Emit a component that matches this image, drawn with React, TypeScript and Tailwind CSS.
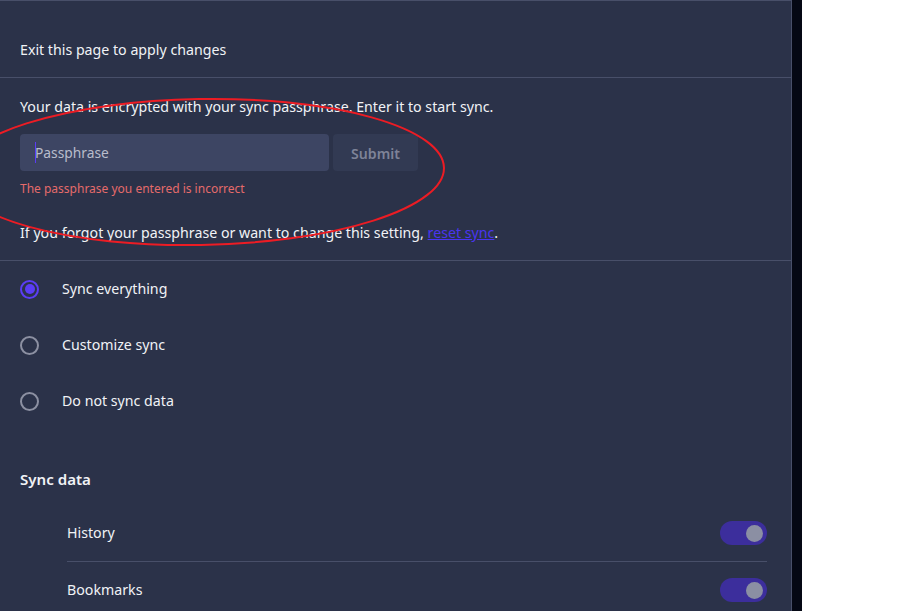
import React from "react";

function Radio({ checked }: { checked?: boolean }) {
  return checked ? (
    <span className="w-[19px] h-[19px] rounded-full border-2 border-[#5b3df5] flex items-center justify-center">
      <span className="w-[10px] h-[10px] rounded-full bg-[#5b3df5]" />
    </span>
  ) : (
    <span className="w-[19px] h-[19px] rounded-full border-2 border-[#8c90a2]" />
  );
}

function Toggle() {
  return (
    <span className="w-[47px] h-[24px] rounded-full bg-[#3c2e9c] flex items-center justify-end pr-[4px]">
      <span className="w-[17px] h-[17px] rounded-full bg-[#8b8fa3]" />
    </span>
  );
}

export default function App() {
  const font = { fontFamily: '"Noto Sans", "Segoe UI", sans-serif' };
  return (
    <div className="w-[900px] h-[611px] bg-white flex overflow-hidden relative" style={font}>
      <div className="w-[792px] h-full bg-[#2b3249] border-t border-r border-[#484f69] flex flex-col text-[#f1f2f6] text-[14.2px]">
        <div className="px-5 pt-[39px] pb-[17px] border-b border-[#484f69]">
          <div className="leading-[20px]">Exit this page to apply changes</div>
        </div>
        <div className="px-5 pt-[19px] pb-[17px] border-b border-[#484f69]">
          <div className="leading-[20px]">Your data is encrypted with your sync passphrase. Enter it to start sync.</div>
          <div className="mt-[17px] flex gap-[4px] h-[37px]">
            <div className="w-[309px] rounded-[4px] bg-[#3d4563] flex items-center pl-[15px] pt-[2px] relative">
              <span className="absolute left-[15px] top-[8px] w-[1px] h-[21px] bg-[#5b3df5]" />
              <span className="text-[#b9bdcc] text-[13.8px]">Passphrase</span>
            </div>
            <div className="w-[85px] rounded-[4px] bg-[#323a53] flex items-center justify-center pt-[2px] text-[#7e8398] font-semibold text-[14.1px]">
              Submit
            </div>
          </div>
          <div className="mt-[10px] leading-[16px] text-[12px] text-[#e56b6b]">The passphrase you entered is incorrect</div>
          <div className="mt-[26px] leading-[20px]">
            If you forgot your passphrase or want to change this setting,{" "}
            <span className="text-[#4a35f0] underline">reset sync</span>.
          </div>
        </div>
        <div className="px-5">
          {[
            ["Sync everything", true],
            ["Customize sync", false],
            ["Do not sync data", false],
          ].map(([label, c]) => (
            <div key={label as string} className="h-[56px] flex items-center">
              <Radio checked={c as boolean} />
              <span className="ml-[23px]">{label as string}</span>
            </div>
          ))}
          <div className="mt-[40px] leading-[20px] text-[15.1px] font-semibold">Sync data</div>
        </div>
        <div className="mt-[16px] pl-[67px] pr-[24px]">
          <div className="h-[57px] flex items-center justify-between border-b border-[#484f69]">
            <span>History</span>
            <Toggle />
          </div>
          <div className="h-[56px] flex items-center justify-between">
            <span>Bookmarks</span>
            <Toggle />
          </div>
        </div>
      </div>
      <div className="w-[10px] h-full bg-[#050814]" />
      <svg className="absolute left-0 top-0 pointer-events-none" width="900" height="611">
        <ellipse cx="200" cy="172" rx="244" ry="73" fill="none" stroke="#ec1c24" strokeWidth="2" transform="rotate(-1 200 172)" />
      </svg>
    </div>
  );
}
